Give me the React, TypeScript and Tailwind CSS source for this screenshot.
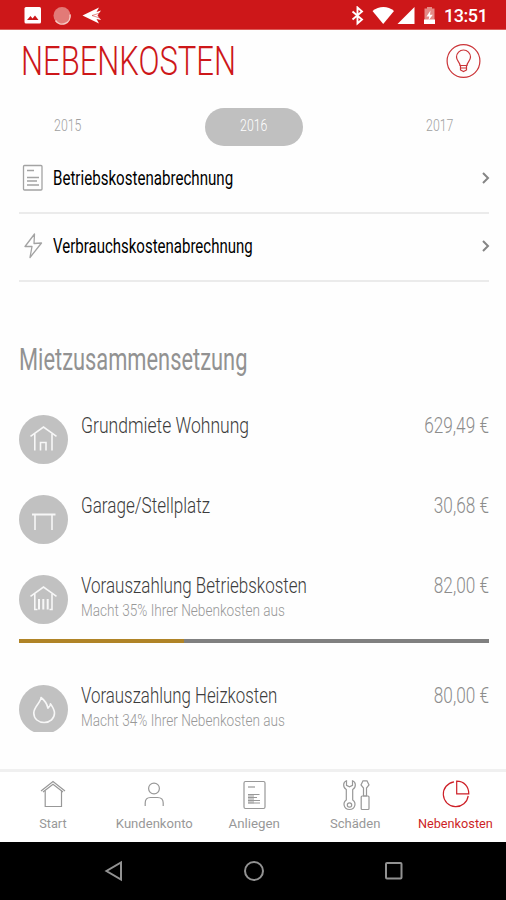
import type { ReactNode } from "react";
import clsx from "clsx";

type Cost = {
  label: string;
  labelClass: string;
  amount: string;
  amountClass: string;
  icon: ReactNode;
  iconHeight: number;
  note?: string;
  share?: number;
  rowClass: string;
};

type Tab = {
  label: string;
  labelClass: string;
  icon: ReactNode;
  active?: boolean;
};

// horizontally condensed text, the scale comes in through className
function Narrow({ children, className }: { children: ReactNode; className?: string }) {
  return <span className={clsx("inline-block whitespace-nowrap", className)}>{children}</span>;
}

const years = ["2015", "2016", "2017"];

const costs: Cost[] = [
  {
    label: "Grundmiete Wohnung",
    labelClass: "scale-x-[0.816]",
    amount: "629,49 €",
    amountClass: "scale-x-[0.8]",
    rowClass: "h-20",
    iconHeight: 49,
    icon: (
      <>
        <path d="M11.500 21.300L24.500 12L37.500 21.300" />
        <path d="M15.800 19V35.500M33 19V35.500" />
        <path d="M21.500 35.500V27.500H27V35.500" />
      </>
    ),
  },
  {
    label: "Garage/Stellplatz",
    labelClass: "scale-x-[0.795]",
    amount: "30,68 €",
    amountClass: "scale-x-[0.8]",
    rowClass: "h-20",
    iconHeight: 49,
    icon: (
      <>
        <path d="M13 19.500H36.500" strokeWidth="2" />
        <path d="M16 19.500V35M33 19.500V35" />
      </>
    ),
  },
  {
    label: "Vorauszahlung Betriebskosten",
    labelClass: "scale-x-[0.79]",
    amount: "82,00 €",
    amountClass: "scale-x-[0.8]",
    note: "Macht 35% Ihrer Nebenkosten aus",
    share: 35,
    rowClass: "h-[110px]",
    iconHeight: 49,
    icon: (
      <>
        <path d="M11.500 21.300L24.500 12L37.500 21.300" />
        <path d="M15.800 19V34.500H18.500M33 19V34.500H30.500" />
        <path d="M20 24V34.500M24.300 24V34.500M28.700 24V34.500" strokeWidth="2" />
      </>
    ),
  },
  {
    label: "Vorauszahlung Heizkosten",
    labelClass: "scale-x-[0.784]",
    amount: "80,00 €",
    amountClass: "scale-x-[0.8]",
    note: "Macht 34% Ihrer Nebenkosten aus",
    rowClass: "h-[47px]",
    iconHeight: 47,
    icon: (
      <path d="M22 12.500C22 17.500 14.800 21.500 14.800 28C14.800 34 19.500 37.500 25.200 37.500C31 37.500 35.500 33.500 35.500 28C35.500 24.500 33.500 22 31.500 18.800C31.500 20.500 30.500 22 29 23.200C28 19 26 15.500 22 12.500Z" strokeLinejoin="round" />
    ),
  },
];

const tabs: Tab[] = [
  {
    label: "Start",
    labelClass: "scale-x-[1.06]",
    icon: (
      <>
        <path d="M5 14L17 4.500L29 14" />
        <path d="M7 15L17 7.200L27 15" />
        <path d="M9.200 13.500V29.500H25.500V13.500" />
      </>
    ),
  },
  {
    label: "Kundenkonto",
    labelClass: "scale-x-[1.09]",
    icon: (
      <>
        <circle cx="17" cy="11.500" r="5.400" />
        <path d="M8.200 29V26C8.200 22.300 10.200 20.500 13.500 20.500H20.500C24 20.500 26.200 22.300 26.200 26V29" />
      </>
    ),
  },
  {
    label: "Anliegen",
    labelClass: "scale-x-[1.11]",
    icon: (
      <>
        <rect x="7" y="4.500" width="21" height="27" rx="1.500" />
        <path d="M11 10H18" />
        <path d="M11 17H17V26.500H11Z" fill="currentColor" fillOpacity="0.5" stroke="none" />
        <path d="M11 17.500H22.500M11 20.500H20M11 23.500H23M11 26H23" />
      </>
    ),
  },
  {
    label: "Schäden",
    labelClass: "scale-x-[1.09]",
    icon: (
      <>
        <path d="M8.500 3.800C5 5 4.500 10 8.300 12.500V23C4.500 25.500 5.500 32.500 11.500 32.500C17.500 32.500 18.500 25.500 14.700 23V12.500C18.500 10 18 5 14.500 3.800V8.300L11.500 9.800L8.500 8.300Z" />
        <circle cx="11.500" cy="28" r="2.200" />
        <path d="M25 3.800H29L31 8L28.500 11V19H25.500V11L23 8Z" />
        <rect x="23.200" y="19" width="7.800" height="13.500" rx="1" />
      </>
    ),
  },
  {
    label: "Nebenkosten",
    labelClass: "scale-x-[1.06]",
    active: true,
    icon: (
      <>
        <path d="M15 4.800A12.500 12.500 0 1 0 29.200 18.800" />
        <path d="M17.700 4.200V16.800H29.800C29.800 9.500 25 4.200 17.700 4.200Z" />
      </>
    ),
  },
];

function StatusBar() {
  return (
    <div className="flex h-[30px] items-center border-b border-[#dc5b58] bg-[#cd1719] pl-6 pr-[16px] text-white">
      <svg className="mt-[2px]" width="78" height="20" viewBox="0 0 78 20">
        <rect x="0.500" y="1" width="16.500" height="16.500" rx="1.500" fill="#fff" />
        <path d="M3 14L6.500 10L8.500 12.500L11 9.500L14.500 14Z" fill="#cd1719" />
        <circle cx="38" cy="9.500" r="8.500" fill="#e27a77" />
        <path d="M31.500 14.500A8 8 0 0 0 46 8.500" fill="none" stroke="#f6cbc5" strokeWidth="1.500" />
        <path d="M58.500 9.500L75 1.500L72.500 6L77 4.500L73.500 9.500L77 14L72.500 13L75 17.500Z" fill="#fff" />
        <path d="M68 9.500L76 7M68 9.500L76 12" stroke="#cd1719" strokeWidth="0.500" />
      </svg>
      <div className="flex-1" />
      <svg className="mt-[2px]" width="90" height="20" viewBox="0 0 90 20">
        <path d="M2.500 5.500L12 13.500L7.500 17.500V1.500L12 5.500L2.500 13.500" fill="none" stroke="#fff" strokeWidth="1.900" />
        <path d="M22.500 5C29 -0.500 38 -0.500 44 5L33.200 18Z" fill="#fff" />
        <path d="M47.500 18H64.500V1Z" fill="#fff" />
        <path d="M75 2.500H77V1H82V2.500H84.500V18H74.500V2.500Z" fill="#e58a86" />
        <path d="M74 13.500H85V18H74Z" fill="#fff" />
        <path d="M80.500 4.500L76.500 10.500H79.200L78.500 14.500L82.800 8.800H80Z" fill="#fff" />
      </svg>
      <Narrow className="ml-1 mt-[2px] w-[46px] text-[18px] font-medium leading-[20px] tracking-tight">13:51</Narrow>
    </div>
  );
}

function DocumentIcon() {
  return (
    <svg width="22" height="28" viewBox="0 0 22 28" fill="none" stroke="#a3a3a3" strokeWidth="1.300">
      <rect x="1.500" y="1.500" width="18.500" height="24.500" rx="1" />
      <path d="M5 6.500H12M5 13.500H17M5 17H15M5 21H17" />
    </svg>
  );
}

function BoltIcon() {
  return (
    <svg width="22" height="28" viewBox="0 0 22 28" fill="none" stroke="#a3a3a3" strokeWidth="1.300" strokeLinejoin="round">
      <path d="M12.500 2L3 14.500H10L8 25.500L19.500 11L12 11.500Z" />
    </svg>
  );
}

function LinkRow({ icon, label, className }: { icon: ReactNode; label: string; className: string }) {
  return (
    <div className="flex h-[68px] items-center border-b-2 border-[#ebebeb] pb-[3px]">
      <div className="ml-[3px] w-[31px]">{icon}</div>
      <Narrow className={clsx("origin-left text-[20px] leading-6 text-black", className)}>{label}</Narrow>
      <svg className="-mr-[2px] ml-auto" width="10" height="14" viewBox="0 0 10 14" fill="none" stroke="#858585" strokeWidth="2">
        <path d="M2 2L7 7L2 12" />
      </svg>
    </div>
  );
}

function CostRow({ cost }: { cost: Cost }) {
  return (
    <div className={cost.rowClass}>
      <div className="flex items-start">
        <svg
          className="shrink-0"
          width="49"
          height={cost.iconHeight}
          viewBox={`0 0 49 ${cost.iconHeight}`}
          fill="none"
          stroke="#f7f7f7"
          strokeWidth="1.600"
        >
          <circle cx="24.500" cy="24.500" r="24.500" fill="#c1c1c1" stroke="none" />
          {cost.icon}
        </svg>
        <div className="ml-[13px] flex-1">
          <div className="-mt-px flex h-6 items-center justify-between text-[21.500px] font-light leading-6">
            <Narrow className={clsx("origin-left text-[#3c3c3c]", cost.labelClass)}>{cost.label}</Narrow>
            <Narrow className={clsx("origin-right text-[#8c8c8c]", cost.amountClass)}>{cost.amount}</Narrow>
          </div>
          {cost.note && (
            <Narrow className="mt-[3px] block origin-left scale-x-[0.85] text-[16px] font-light leading-5 text-[#989898]">
              {cost.note}
            </Narrow>
          )}
        </div>
      </div>
      {cost.share !== undefined && (
        <div className="mt-[15px] h-[4px] bg-[#808080]">
          <div className="h-full bg-[#b08427]" style={{ width: `${cost.share}%` }} />
        </div>
      )}
    </div>
  );
}

export default function App() {
  return (
    <div className="flex h-[900px] w-[506px] flex-col overflow-hidden bg-[#fefefe] font-['Roboto','Liberation_Sans',sans-serif]">
      <StatusBar />

      <header className="flex h-[62px] shrink-0 items-center justify-between pl-[21px] pr-[25px]">
        <Narrow className="mt-[2px] origin-left scale-x-[0.775] text-[40px] font-light leading-[48px] text-[#cd1719]">NEBENKOSTEN</Narrow>
        <svg width="36" height="36" viewBox="0 0 36 36" fill="none" stroke="#cb3438" strokeWidth="1.200">
          <circle cx="18.500" cy="18" r="16.400" />
          <path d="M15 22.500C15 19 11.500 18 11.500 14A7 7 0 0 1 25.500 14C25.500 18 22 19 22 22.500Z" />
          <path d="M15 25H22M15.500 22.500V27L18.500 28.500L21.500 27V22.500" />
        </svg>
      </header>

      <div className="ml-[19px] mr-[17px] mt-4 flex shrink-0 justify-between">
        {years.map((year) => (
          <div
            key={year}
            className={clsx(
              "flex h-[38px] w-[98px] justify-center rounded-full pt-[8px] text-[16px] font-light leading-5",
              year === "2016" ? "bg-[#c0c0c0] text-white" : "text-[#a0a0a0]"
            )}
          >
            <Narrow className="scale-x-[0.77]">{year}</Narrow>
          </div>
        ))}
      </div>

      <main className="ml-[19px] mr-[17px] flex-1">
        <LinkRow icon={<DocumentIcon />} label="Betriebskostenabrechnung" className="scale-x-[0.755]" />
        <LinkRow icon={<BoltIcon />} label="Verbrauchskostenabrechnung" className="scale-x-[0.75]" />

        <h2 className="mt-[62px] h-8 leading-8">
          <Narrow className="origin-left scale-x-[0.705] text-[31px] leading-8 text-[#929292]">Mietzusammensetzung</Narrow>
        </h2>

        <div className="mt-[39px]">
          {costs.map((cost) => (
            <CostRow key={cost.label} cost={cost} />
          ))}
        </div>
      </main>

      <nav className="grid h-[73px] shrink-0 grid-cols-5 border-t-[3px] border-[#f0f0f0] bg-white pl-[3px]">
        {tabs.map((tab) => (
          <div key={tab.label} className={clsx("flex flex-col items-center pt-[5px]", tab.active ? "text-[#cd1f27]" : "text-[#989898]")}>
            <svg width="34" height="34" viewBox="0 0 34 34" fill="none" stroke="currentColor" strokeWidth="1.200">
              {tab.icon}
            </svg>
            <Narrow className={clsx("mt-[5px] text-[12px] leading-4", tab.labelClass)}>{tab.label}</Narrow>
          </div>
        ))}
      </nav>

      <div className="flex h-[58px] shrink-0 items-center justify-center gap-[112px] bg-black pl-px">
        <svg width="28" height="28" viewBox="0 0 28 28" fill="none" stroke="#929292" strokeWidth="2">
          <path d="M21 5.500V22.500L6.500 14Z" />
        </svg>
        <svg width="28" height="28" viewBox="0 0 28 28" fill="none" stroke="#929292" strokeWidth="2">
          <circle cx="14" cy="14" r="9" />
        </svg>
        <svg width="28" height="28" viewBox="0 0 28 28" fill="none" stroke="#929292" strokeWidth="2">
          <rect x="6" y="6" width="15.500" height="15.500" rx="1" />
        </svg>
      </div>
    </div>
  );
}
